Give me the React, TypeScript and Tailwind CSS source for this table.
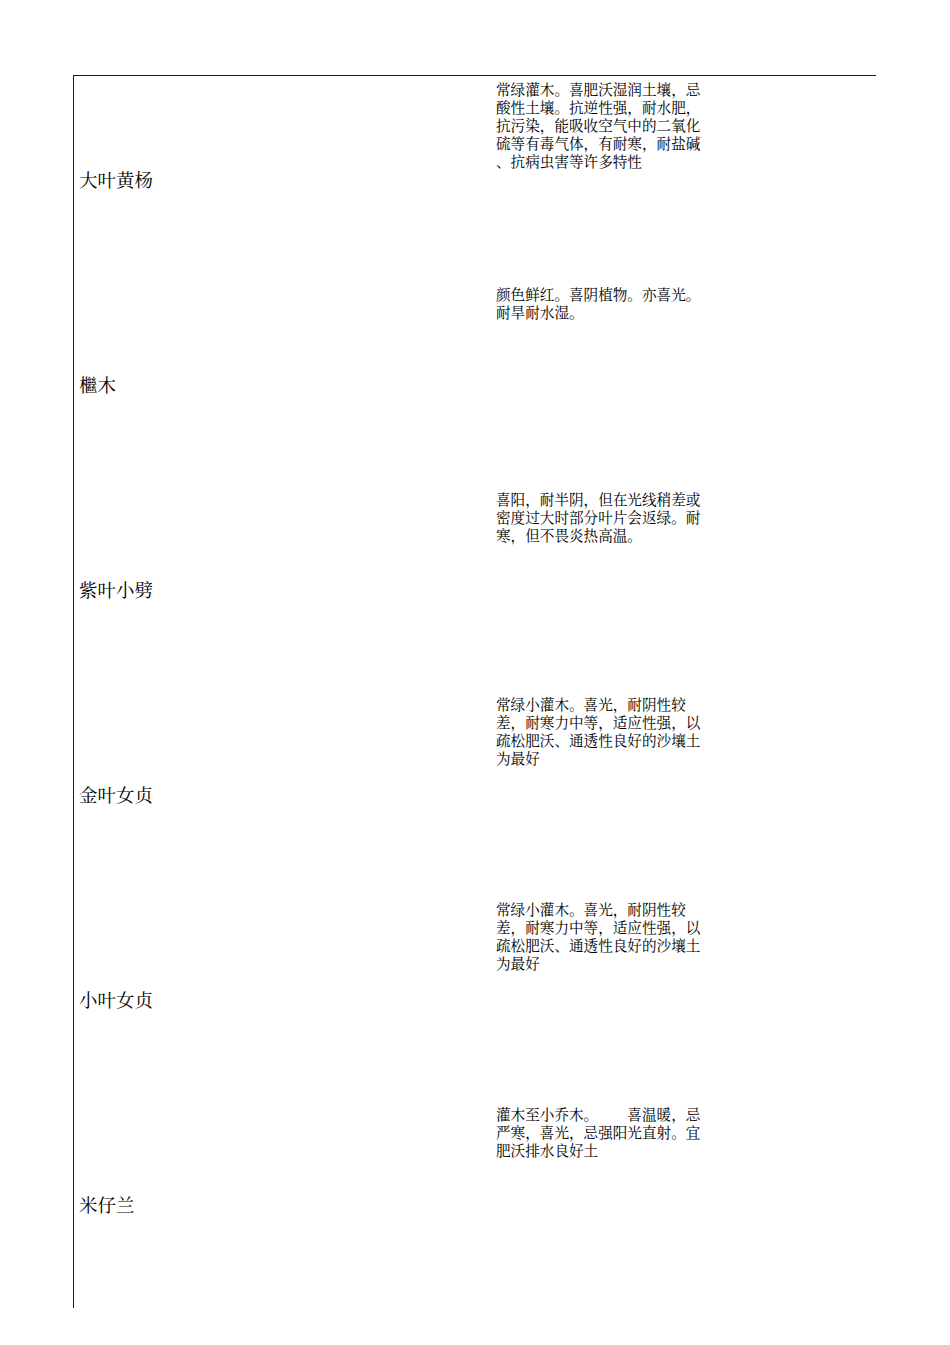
import React from "react";

const rows: { name: string; lines: string[] }[] = [
  {
    name: "大叶黄杨",
    lines: [
      "常绿灌木。喜肥沃湿润土壤，忌",
      "酸性土壤。抗逆性强，耐水肥，",
      "抗污染，能吸收空气中的二氧化",
      "硫等有毒气体，有耐寒，耐盐碱",
      "、抗病虫害等许多特性",
    ],
  },
  {
    name: "檵木",
    lines: ["颜色鲜红。喜阴植物。亦喜光。", "耐旱耐水湿。"],
  },
  {
    name: "紫叶小劈",
    lines: [
      "喜阳，耐半阴，但在光线稍差或",
      "密度过大时部分叶片会返绿。耐",
      "寒，但不畏炎热高温。",
    ],
  },
  {
    name: "金叶女贞",
    lines: [
      "常绿小灌木。喜光，耐阴性较",
      "差，耐寒力中等，适应性强，以",
      "疏松肥沃、通透性良好的沙壤土",
      "为最好",
    ],
  },
  {
    name: "小叶女贞",
    lines: [
      "常绿小灌木。喜光，耐阴性较",
      "差，耐寒力中等，适应性强，以",
      "疏松肥沃、通透性良好的沙壤土",
      "为最好",
    ],
  },
  {
    name: "米仔兰",
    lines: [
      "灌木至小乔木。\u2003\u2003喜温暖，忌",
      "严寒，喜光，忌强阳光直射。宜",
      "肥沃排水良好土",
    ],
  },
];

export default function App() {
  return (
    <div
      className="w-[950px] h-[1345px] bg-white text-black pt-[75px] pl-[73px]"
      style={{ fontFamily: '"Noto Serif CJK SC", "Noto Sans CJK SC", serif' }}
    >
      <div className="w-[803px] h-[1233px] border-t border-l border-[#1a1a1a] flex flex-col">
        {rows.map((r) => (
          <div key={r.name} className="h-[205px] flex shrink-0">
            <div className="w-[422px] flex items-center pl-[5px] pt-[1px] text-[18.5px] leading-[22px] whitespace-nowrap">
              {r.name}
            </div>
            <div className="pt-[4px] text-[14.6px] leading-[18px]">
              {r.lines.map((l, i) => (
                <div key={i} className="whitespace-nowrap h-[18px]">
                  {l}
                </div>
              ))}
            </div>
          </div>
        ))}
      </div>
    </div>
  );
}
